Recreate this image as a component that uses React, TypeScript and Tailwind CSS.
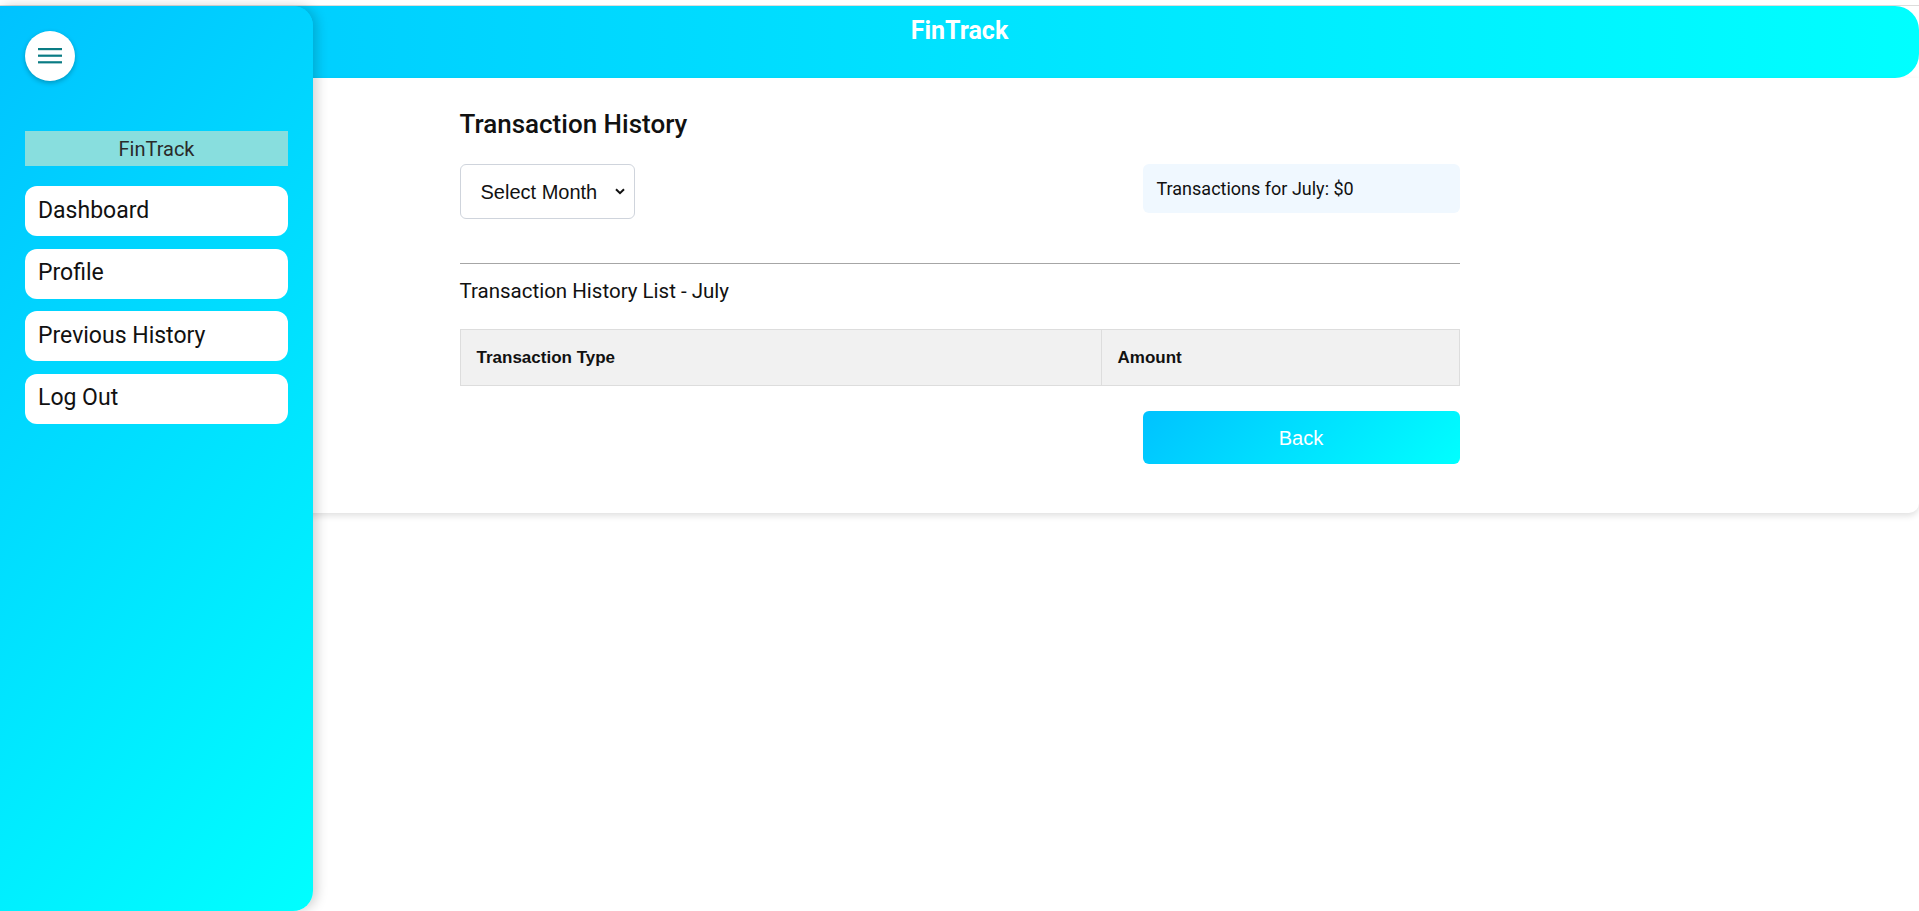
import { useState } from 'react';

const menuItems = ['Dashboard', 'Profile', 'Previous History', 'Log Out'];

const Sidebar: React.FC = () => {
    return (
        <aside className="absolute left-0 top-[6px] bottom-0 w-[313px] rounded-r-[20px] bg-linear-135 from-[#00c2ff] to-[#00ffff] shadow-[4px_0_12px_rgba(0,0,0,0.18)] px-[25px] pt-[25px] z-10">
            <button className="w-[50px] h-[50px] rounded-full bg-white shadow-[0_2px_5px_rgba(0,0,0,0.25)] flex items-center justify-center">
                <svg width="24" height="18" viewBox="0 0 24 18">
                    <rect x="0" y="1" width="24" height="2.2" fill="#0a7c84" />
                    <rect x="0" y="7.6" width="24" height="2.2" fill="#0a7c84" />
                    <rect x="0" y="14.2" width="24" height="2.2" fill="#0a7c84" />
                </svg>
            </button>
            <div className="mt-[50px] h-[35px] bg-[#88dede] flex items-center justify-center text-[20px] text-[#2a2a2a] font-['Roboto',sans-serif]">
                FinTrack
            </div>
            <nav className="mt-[20px] flex flex-col gap-[12.5px]">
                {menuItems.map((item) => (
                    <a
                        key={item}
                        href="#"
                        className="h-[50px] bg-white rounded-[12px] flex items-center pl-[13px] text-[23px] text-[#111] font-['Roboto',sans-serif]"
                    >
                        {item}
                    </a>
                ))}
            </nav>
        </aside>
    );
};

export default function App() {
    const [month] = useState('July');
    const total = 0;

    return (
        <div className="relative min-h-screen bg-white font-['Roboto',sans-serif] text-[#111]">
            <div className="h-[6px] border-b border-[#dcdcdc]" />
            <Sidebar />

            <header className="h-[72px] rounded-r-[24px] bg-linear-to-r from-[#00c6ff] to-[#00ffff] pt-[11px] text-center">
                <h1 className="text-[25px] leading-[28px] font-bold text-white">FinTrack</h1>
            </header>

            <main className="bg-white rounded-br-[10px] shadow-[0_3px_6px_rgba(0,0,0,0.12)] pt-[31px] pb-[49px]">
                <div className="w-[1000px] mx-auto">
                    <h2 className="text-[26px] leading-[30px] font-medium text-[#111]">Transaction History</h2>

                    <div className="mt-[25px] flex items-start justify-between">
                        <div className="w-[175px] h-[55px] border border-[#cfd4dc] rounded-[6px] flex items-center justify-between pl-[20px] pr-[9px] font-['Liberation_Sans',Arial,sans-serif] text-[20px] text-[#111]">
                            <span>Select Month</span>
                            <svg width="10" height="7" viewBox="0 0 10 7" fill="none">
                                <path d="M1 1.2 L5 5.2 L9 1.2" stroke="#111" strokeWidth="2" />
                            </svg>
                        </div>
                        <div className="w-[317px] h-[49px] bg-[#f0f8ff] rounded-[6px] flex items-center px-[14px] text-[18px] text-[#111]">
                            Transactions for {month}: ${total}
                        </div>
                    </div>

                    <div className="mt-[44px] h-px bg-[#a6a6a6]" />

                    <p className="mt-[15px] text-[20.5px] leading-[24px] text-[#111]">Transaction History List - {month}</p>

                    <table className="mt-[26px] w-full border-collapse font-['Liberation_Sans',Arial,sans-serif]">
                        <thead>
                            <tr className="bg-[#f1f1f1]">
                                <th className="w-[641px] h-[56px] border border-[#dddddd] px-[16px] text-left text-[17px] font-bold">Transaction Type</th>
                                <th className="h-[56px] border border-[#dddddd] px-[16px] text-left text-[17px] font-bold">Amount</th>
                            </tr>
                        </thead>
                        <tbody></tbody>
                    </table>

                    <div className="mt-[25px] flex justify-end">
                        <button className="w-[317px] h-[53px] rounded-[6px] bg-linear-135 from-[#00c2ff] to-[#00ffff] text-white text-[20px] font-['Liberation_Sans',Arial,sans-serif]">
                            Back
                        </button>
                    </div>
                </div>
            </main>
        </div>
    );
}
